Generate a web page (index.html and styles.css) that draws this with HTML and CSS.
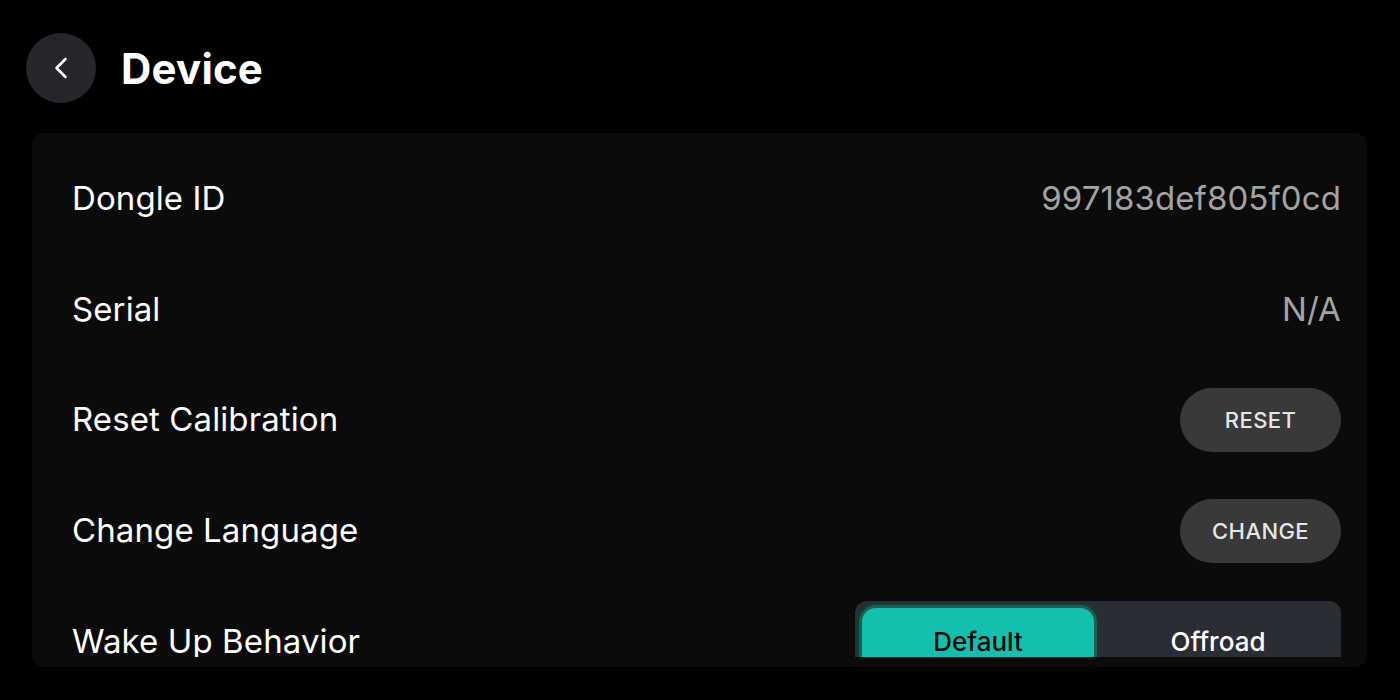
FILE: index.html
```html
<!DOCTYPE html>
<html lang="en">
<head>
<meta charset="utf-8">
<title>Device</title>
<link rel="stylesheet" href="styles.css">
</head>
<body>
<div class="page">
  <header class="header">
    <button class="back" aria-label="Back">
      <svg width="24" height="24" viewBox="0 0 24 24"><path d="M16.5 3 L7.5 12 L16.5 21" fill="none" stroke="#fff" stroke-width="2.6" stroke-linecap="round" stroke-linejoin="round"/></svg>
    </button>
    <h1 class="title">Device</h1>
  </header>
  <main class="card">
    <div class="scroll">
      <div class="row"><span class="label">Dongle ID</span><span class="value">997183def805f0cd</span></div>
      <div class="row"><span class="label">Serial</span><span class="value">N/A</span></div>
      <div class="row"><span class="label">Reset Calibration</span><button class="pill">RESET</button></div>
      <div class="row"><span class="label">Change Language</span><button class="pill">CHANGE</button></div>
      <div class="row"><span class="label">Wake Up Behavior</span>
        <div class="segment">
          <div class="seg seg-on">Default</div>
          <div class="seg">Offroad</div>
        </div>
      </div>
    </div>
  </main>
</div>
</body>
</html>
```
FILE: styles.css
```css
* { box-sizing: border-box; }
html, body { margin: 0; padding: 0; background: #000; }
body {
  width: 1400px;
  height: 700px;
  overflow: hidden;
  font-family: Inter, "Noto Sans", sans-serif;
  color: #fff;
}
.page {
  display: flex;
  flex-direction: column;
  padding: 33px 33px 33px 26px;
  height: 700px;
}
.header {
  display: flex;
  align-items: center;
  gap: 25px;
  height: 70px;
}
.back {
  width: 70px;
  height: 70px;
  border-radius: 50%;
  border: none;
  background: #26272c;
  display: flex;
  align-items: center;
  justify-content: center;
  padding: 0;
}
.title {
  margin: 0;
  font-size: 42px;
  font-weight: 700;
  letter-spacing: 0.2px;
}
.card {
  margin: 30px 0 0 6px;
  background: #0b0b0b;
  border-radius: 12px;
  padding: 10px 26px 10px 40px;
  height: 534px;
}
.scroll {
  height: 514px;
  overflow: hidden;
}
.row {
  height: 110.75px;
  display: flex;
  align-items: center;
  justify-content: space-between;
}
.label {
  font-size: 33px;
  line-height: 1;
  font-weight: 400;
  letter-spacing: 0.1px;
  color: #fff;
}
.value {
  font-size: 33px;
  line-height: 1;
  letter-spacing: 0.1px;
  color: #a3a3a3;
}
.pill {
  width: 161px;
  height: 64px;
  border: none;
  border-radius: 32px;
  background: #393939;
  color: #e6e6e6;
  font-family: Inter, "Noto Sans", sans-serif;
  font-size: 22px;
  font-weight: 500;
  letter-spacing: 0.4px;
}
.segment {
  flex: none;
  width: 486px;
  height: 80px;
  background: #2b2d34;
  border-radius: 12px;
  padding: 7px;
  display: flex;
  gap: 8px;
}
.seg {
  flex: 1;
  border-radius: 14px;
  display: flex;
  align-items: center;
  justify-content: center;
  font-size: 26px;
  font-weight: 500;
  color: #fff;
}
.seg-on {
  background: #13c0ad;
  color: #0c0c0c;
  box-shadow: 0 0 0 3px #1f5d57, 0 0 0 6px #173a37;
}
```
